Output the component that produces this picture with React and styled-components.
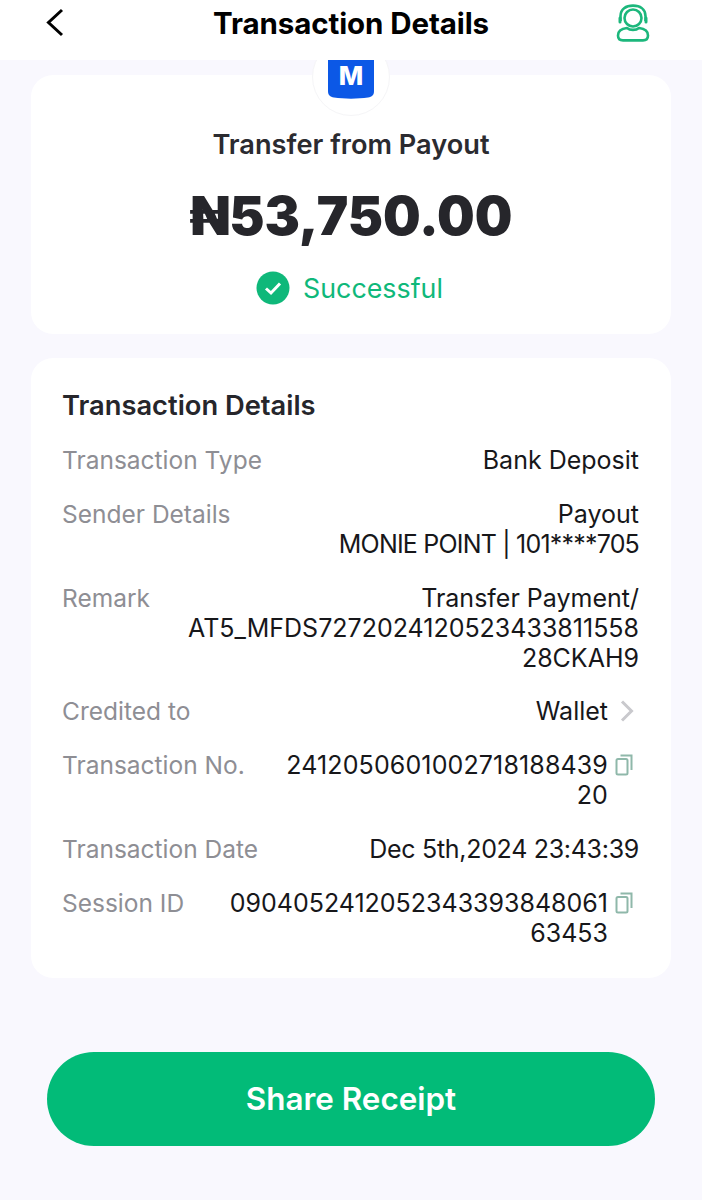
import styled, { createGlobalStyle } from "styled-components";

const Global = createGlobalStyle`
  html, body { margin: 0; padding: 0; background: #f9f8fe; }
  * { box-sizing: border-box; }
`;

const Page = styled.div`
  width: 702px;
  height: 1200px;
  overflow: hidden;
  background: #f9f8fe;
  font-family: Inter, "Liberation Sans", sans-serif;
  color: #1c1c1f;
`;

const Header = styled.header`
  position: relative;
  z-index: 2;
  height: 60px;
  padding: 0 51px 15px 45px;
  background: #fff;
  display: flex;
  align-items: center;
  justify-content: space-between;
`;

const HeaderTitle = styled.h1`
  margin: 0;
  position: absolute;
  left: 0;
  right: 0;
  top: 5px;
  text-align: center;
  font-size: 29.5px;
  line-height: 36px;
  font-weight: 700;
  color: #000;
  letter-spacing: -0.1px;
`;

const Content = styled.main`
  padding: 15px 31px 0;
  display: flex;
  flex-direction: column;
  gap: 24px;
`;

const Card = styled.section`
  position: relative;
  background: #fff;
  border-radius: 22px;
`;

const Summary = styled(Card)`
  height: 259px;
  padding-top: 53px;
  display: flex;
  flex-direction: column;
  align-items: center;
`;

const Avatar = styled.div`
  position: absolute;
  top: -37px;
  left: 281px;
  width: 78px;
  height: 78px;
  border-radius: 50%;
  background: #fff;
  border: 1px solid #f5f5f7;
  display: flex;
  align-items: center;
  justify-content: center;
`;

const Source = styled.div`
  font-size: 27.2px;
  line-height: 34px;
  font-weight: 600;
  color: #2b2b30;
`;

const Amount = styled.div`
  margin-top: 23px;
  font-size: 53px;
  line-height: 62px;
  font-weight: 900;
  color: #26262b;
`;

const Status = styled.div`
  margin-top: 23px;
  margin-right: 3px;
  display: flex;
  align-items: center;
  gap: 13px;
  font-size: 26.8px;
  line-height: 36px;
  color: #0fb87a;
`;

const Details = styled(Card)`
  height: 620px;
  padding: 31px 32px 0 31px;
`;

const DetailsTitle = styled.h2`
  margin: 0 0 22px;
  font-size: 27.3px;
  line-height: 34px;
  font-weight: 600;
  color: #26262b;
`;

const Rows = styled.div`
  display: flex;
  flex-direction: column;
  gap: 23.75px;
`;

const Row = styled.div`
  display: flex;
  justify-content: space-between;
  align-items: flex-start;
  font-size: 25px;
  line-height: 30px;
`;

const Label = styled.div`
  color: #8e8e94;
  font-size: 24.5px;
  white-space: nowrap;
`;

const Value = styled.div`
  display: flex;
  align-items: flex-start;
  gap: ${(p) => p.$gap || 0}px;
  text-align: right;
  color: #17171a;
  white-space: nowrap;
  letter-spacing: ${(p) => p.$tracking || 0}px;
`;

const Tight = styled.span`
  letter-spacing: -0.8px;
`;

const IconSlot = styled.span`
  display: flex;
  height: 30px;
  align-items: center;
  margin-right: ${(p) => p.$right}px;
`;

const Button = styled.button`
  display: block;
  width: 608px;
  height: 94px;
  margin: 74px auto 0;
  border: 0;
  border-radius: 47px;
  background: #02bb78;
  color: #fff;
  font-family: inherit;
  font-size: 31.4px;
  font-weight: 600;
`;

const BackIcon = () => (
  <svg width="20" height="30" viewBox="0 0 20 30" fill="none" stroke="#000" strokeWidth="3">
    <path d="M17 2 L3.5 14.5 L17 27" />
  </svg>
);

const AgentIcon = () => (
  <svg width="36" height="38" viewBox="0 0 36 38" fill="none" stroke="#1cb77c" strokeWidth="2.6">
    <circle cx="18" cy="14" r="8.5" />
    <path d="M5.5 17 V12 C5.5 5 11 1.6 18 1.6 C25 1.6 30.5 5 30.5 12 V17" />
    <path d="M12 24 C7 24.5 3 27 3 31.5 C3 34.5 5 36.4 8 36.4 H28 C31 36.4 33 34.5 33 31.5 C33 27 29 24.5 24 24 C21 26.5 15 26.5 12 24 Z" />
    <rect x="3.5" y="12.5" width="3" height="7" rx="1.5" fill="#1cb77c" stroke="none" />
    <rect x="29.5" y="12.5" width="3" height="7" rx="1.5" fill="#1cb77c" stroke="none" />
  </svg>
);

const LogoIcon = () => (
  <svg width="46" height="60" viewBox="0 0 46 60">
    <path d="M0 0 H46 V44 C46 48 44 50 40 50.5 C30 52 16 52 6 50.5 C2 50 0 48 0 44 Z" fill="#0c58e6" />
    <text x="23" y="38" textAnchor="middle" fontFamily="Inter, sans-serif" fontWeight="800" fontSize="26" fill="#fff">M</text>
  </svg>
);

const CheckIcon = () => (
  <svg width="34" height="34" viewBox="0 0 34 34">
    <circle cx="17" cy="17" r="16.5" fill="#0fb87a" />
    <path d="M10 17.5 L15 22 L24 12.5" fill="none" stroke="#fff" strokeWidth="3" />
  </svg>
);

const ChevronIcon = () => (
  <svg width="16" height="24" viewBox="0 0 16 24" fill="none" stroke="#c9c9cd" strokeWidth="3">
    <path d="M3 2.5 L12.5 12 L3 21.5" />
  </svg>
);

const CopyIcon = () => (
  <svg width="18" height="22" viewBox="0 0 18 22" fill="none" stroke="#8fb8aa" strokeWidth="2">
    <rect x="1.5" y="5" width="11" height="15.5" rx="1.5" />
    <path d="M5.5 1.5 H16.5 V16" />
  </svg>
);

export default function App() {
  const transactionNo = "2412050601002718188439";

  return (
    <Page>
      <Global />
      <Header>
        <BackIcon />
        <HeaderTitle>Transaction Details</HeaderTitle>
        <AgentIcon />
      </Header>
      <Content>
        <Summary>
          <Avatar>
            <LogoIcon />
          </Avatar>
          <Source>Transfer from Payout</Source>
          <Amount>₦53,750.00</Amount>
          <Status>
            <CheckIcon />
            Successful
          </Status>
        </Summary>
        <Details>
          <DetailsTitle>Transaction Details</DetailsTitle>
          <Rows>
            <Row>
              <Label>Transaction Type</Label>
              <Value>Bank Deposit</Value>
            </Row>
            <Row>
              <Label>Sender Details</Label>
              <Value>
                <div>
                  Payout
                  <br />
                  <Tight>MONIE POINT | 101****705</Tight>
                </div>
              </Value>
            </Row>
            <Row>
              <Label>Remark</Label>
              <Value>
                <div>
                  Transfer Payment/
                  <br />
                  AT5_MFDS7272024120523433811558
                  <br />
                  28CKAH9
                </div>
              </Value>
            </Row>
            <Row>
              <Label>Credited to</Label>
              <Value $gap={11}>
                Wallet
                <IconSlot $right={4}>
                  <ChevronIcon />
                </IconSlot>
              </Value>
            </Row>
            <Row>
              <Label>Transaction No.</Label>
              <Value $gap={7} $tracking={0.13}>
                <div>
                  {transactionNo}
                  <br />
                  20
                </div>
                <IconSlot $right={6}>
                  <CopyIcon />
                </IconSlot>
              </Value>
            </Row>
            <Row>
              <Label>Transaction Date</Label>
              <Value $tracking={-0.3}>Dec 5th,2024 23:43:39</Value>
            </Row>
            <Row>
              <Label>Session ID</Label>
              <Value $gap={7}>
                <div>
                  0904052412052343393848061
                  <br />
                  63453
                </div>
                <IconSlot $right={6}>
                  <CopyIcon />
                </IconSlot>
              </Value>
            </Row>
          </Rows>
        </Details>
      </Content>
      <Button>Share Receipt</Button>
    </Page>
  );
}
